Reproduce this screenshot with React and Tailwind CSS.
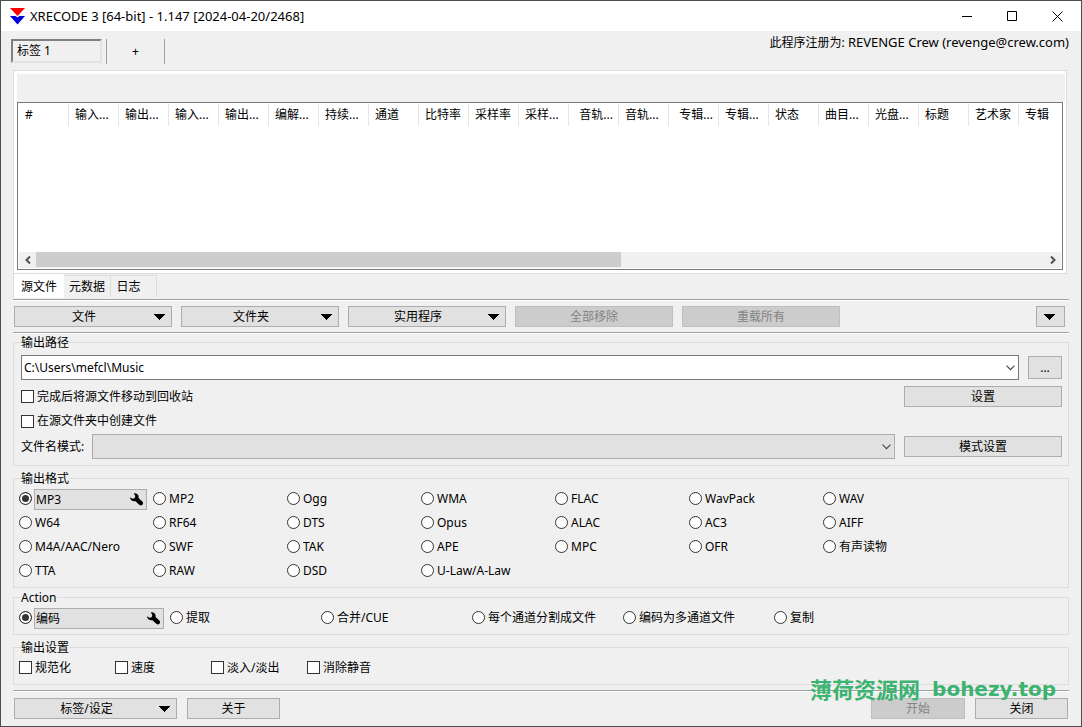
import React, { useState } from "react";
import { clsx } from "clsx";

const COLUMNS = [
  { label: "#" },
  { label: "输入..." },
  { label: "输出..." },
  { label: "输入..." },
  { label: "输出..." },
  { label: "编解..." },
  { label: "持续..." },
  { label: "通道" },
  { label: "比特率" },
  { label: "采样率" },
  { label: "采样..." },
  { label: "音轨...", right: true },
  { label: "音轨..." },
  { label: "专辑...", right: true },
  { label: "专辑..." },
  { label: "状态" },
  { label: "曲目..." },
  { label: "光盘..." },
  { label: "标题" },
  { label: "艺术家" },
  { label: "专辑" },
];

const FORMATS = [
  "MP3", "MP2", "Ogg", "WMA", "FLAC", "WavPack", "WAV",
  "W64", "RF64", "DTS", "Opus", "ALAC", "AC3", "AIFF",
  "M4A/AAC/Nero", "SWF", "TAK", "APE", "MPC", "OFR", "有声读物",
  "TTA", "RAW", "DSD", "U-Law/A-Law",
];

const ACTIONS = ["编码", "提取", "合并/CUE", "每个通道分割成文件", "编码为多通道文件", "复制"];

const OUTPUT_OPTIONS = ["规范化", "速度", "淡入/淡出", "消除静音"];

const Logo = () => (
  <svg width="15" height="17" viewBox="0 0 15 17" className="shrink-0">
    <path d="M0 0h15L7.5 8z" fill="#ff0000" />
    <path d="M0 8h5.5l2 1.6L9.5 8H15L7.5 16.5z" fill="#0000e0" />
  </svg>
);

const DownArrow = () => (
  <svg width="12" height="6" viewBox="0 0 12 6" shapeRendering="crispEdges">
    <path d="M0 0h12L6 6z" fill="#000" />
  </svg>
);

const Chevron = () => (
  <svg
    width="9"
    height="6"
    viewBox="0 0 9 6"
    className="pointer-events-none absolute right-1 top-1/2 -translate-y-1/2"
  >
    <path d="M.5.7l4 4 4-4" fill="none" stroke="#444" strokeWidth="1.1" />
  </svg>
);

const Wrench = () => (
  <svg width="13" height="13" viewBox="0 0 13 13" className="shrink-0">
    <path
      d="M3.8.2C6.300-.2 8.600 1.300 8.600 3.700c0 .500 0 .800-.100 1.200l3.800 3.700c1 1 1 2.300.100 3.200-.900.900-2.200.900-3.200-.100L5.500 8.200C2.900 8.800.100 7.200 0 4.200L2.400 5.700 4.700 5.200 5.300 3z"
      fill="#000"
    />
  </svg>
);

const Separator = () => <div className="h-[2px] shrink-0 border-t border-[#a0a0a0] bg-white" />;

const Button = ({ children, menu, className, disabled }) => (
  <button
    disabled={disabled}
    className={clsx(
      "flex h-[21px] shrink-0 items-center justify-center border",
      disabled
        ? "border-[#bfbfbf] bg-[#cccccc] text-[#838383]"
        : "border-[#adadad] bg-[#e1e1e1] hover:border-[#0078d7] hover:bg-[#e5f1fb]",
      className
    )}
  >
    {menu ? (
      <>
        <span className="flex-1 text-center">{children}</span>
        <span className="pr-[6px]">
          <DownArrow />
        </span>
      </>
    ) : (
      children
    )}
  </button>
);

const Group = ({ title, className, children }) => (
  <fieldset className={clsx("min-w-0 shrink-0 border border-[#dcdcdc]", className)}>
    <legend className="ml-[7px] h-[17px] leading-[17px]">{title}</legend>
    {children}
  </fieldset>
);

const CheckBox = ({ label }) => (
  <label className="flex items-center gap-[3px]">
    <input
      type="checkbox"
      className="size-[13px] shrink-0 appearance-none border border-[#333] bg-white checked:bg-[#333] checked:shadow-[inset_0_0_0_2px_white]"
    />
    <span>{label}</span>
  </label>
);

const Radio = ({ name, label, checked, onChange, boxClass }) => (
  <label className="flex h-6 items-start gap-[2px]">
    <input
      type="radio"
      name={name}
      checked={checked}
      onChange={onChange}
      className="mt-[5px] size-[13px] shrink-0 appearance-none rounded-full border border-[#333] bg-white checked:bg-[#333] checked:shadow-[inset_0_0_0_2px_white]"
    />
    {checked ? (
      <span
        className={clsx(
          "mt-[2px] flex h-[21px] items-center justify-between border border-[#adadad] bg-[#e1e1e1] pl-px pr-[3px]",
          boxClass
        )}
      >
        {label}
        <Wrench />
      </span>
    ) : (
      <span className="pl-px pt-1">{label}</span>
    )}
  </label>
);

const TitleBar = () => (
  <header className="flex h-[30px] shrink-0 items-center bg-white pl-[9px]">
    <Logo />
    <h1 className="ml-[5px] flex-1 text-[13px]">XRECODE 3 [64-bit] - 1.147 [2024-04-20/2468]</h1>
    <button aria-label="最小化" className="flex h-full w-[45px] items-center justify-center">
      <svg width="10" height="10" viewBox="0 0 10 10" stroke="#000">
        <path d="M0 5.5h10" />
      </svg>
    </button>
    <button aria-label="最大化" className="flex h-full w-[45px] items-center justify-center">
      <svg width="10" height="10" viewBox="0 0 10 10" fill="none" stroke="#000">
        <path d="M.5.5h9v9h-9z" />
      </svg>
    </button>
    <button aria-label="关闭" className="flex h-full w-[47px] items-center justify-center">
      <svg width="11" height="11" viewBox="0 0 11 11" stroke="#000">
        <path d="M.5.5l10 10M10.5.5l-10 10" />
      </svg>
    </button>
  </header>
);

const FileList = () => (
  <div className="mr-[2px] flex min-h-[204px] flex-1 flex-col border border-[#dcdcdc] bg-white p-[3px] pr-px">
    <div className="h-7 shrink-0 bg-[#f0f0f0]" />
    <div className="mr-[2px] flex flex-1 flex-col overflow-hidden border border-[#7a7a7a]">
      <div className="flex-1 overflow-hidden pl-px pt-px">
        <table className="w-full min-w-[1043px] table-fixed border-separate border-spacing-0">
          <thead>
            <tr>
              {COLUMNS.map((col, i) => (
                <th
                  key={i}
                  className={clsx(
                    "h-[22px] overflow-hidden whitespace-nowrap p-0 font-normal last:w-auto last:border-r-0",
                    "w-[50px] border-r border-[#e5e5e5]",
                    col.right ? "pr-[5px] text-right" : "pl-[6px] text-left"
                  )}
                >
                  {col.label}
                </th>
              ))}
            </tr>
          </thead>
        </table>
      </div>
      <div className="mx-px mb-px flex h-4 shrink-0 bg-[#f0f0f0]">
        <button aria-label="向左滚动" className="flex w-[17px] items-center justify-center">
          <svg width="6" height="8" viewBox="0 0 6 8" fill="none" stroke="#505050" strokeWidth="2">
            <path d="M5 .5L1.5 4 5 7.5" />
          </svg>
        </button>
        <div className="flex-1">
          <div className="h-[15px] w-[58%] bg-[#cdcdcd]" />
        </div>
        <button aria-label="向右滚动" className="flex w-[17px] items-center justify-center">
          <svg width="6" height="8" viewBox="0 0 6 8" fill="none" stroke="#505050" strokeWidth="2">
            <path d="M1 .5L4.5 4 1 7.5" />
          </svg>
        </button>
      </div>
    </div>
  </div>
);

const ViewTabs = () => (
  <div className="flex h-[25px] shrink-0 items-start">
    <button className="h-6 w-[51px] border-l border-[#dcdcdc] bg-white pt-[2px]">源文件</button>
    <button className="mt-px h-[22px] w-[47px] border-r border-t border-[#dcdcdc]">元数据</button>
    <button className="mt-px h-[22px] w-[46px] border-r border-t border-[#dcdcdc] pr-[10px]">日志</button>
  </div>
);

const App = () => {
  const [format, setFormat] = useState("MP3");
  const [action, setAction] = useState("编码");

  return (
    <div className="relative flex min-h-screen flex-col border border-[#465055] bg-[#f0f0f0] font-['Noto_Sans','Noto_Sans_CJK_SC',sans-serif] text-[12px] leading-4 text-black">
      <TitleBar />

      {/* Session tabs */}
      <div className="flex h-[39px] shrink-0 items-start justify-between pl-[10px] pr-3 pt-[3px]">
        <div className="flex pt-[5px]">
          <button className="h-6 w-[91px] border-2 border-b-[#e3e3e3] border-l-[#808080] border-r-[#e3e3e3] border-t-[#808080] pl-1 text-left">
            标签 1
          </button>
          <button className="ml-1 h-[25px] w-[59px] border-x border-[#a0a0a0]">+</button>
        </div>
        <p>
          此程序注册为: <span className="text-[13px]">REVENGE Crew (revenge@crew.com)</span>
        </p>
      </div>

      <main className="flex flex-1 flex-col px-3">
        <FileList />
        <ViewTabs />
        <Separator />

        <div className="flex shrink-0 gap-[9px] py-[5px] pl-px pr-1">
          <Button menu className="w-[158px]">文件</Button>
          <Button menu className="w-[158px]">文件夹</Button>
          <Button menu className="w-[158px]">实用程序</Button>
          <Button disabled className="w-[158px]">全部移除</Button>
          <Button disabled className="w-[158px]">重载所有</Button>
          <button
            aria-label="更多"
            className="ml-auto flex h-[21px] w-[29px] items-center justify-center border border-[#adadad] bg-[#e1e1e1] pr-[3px]"
          >
            <DownArrow />
          </button>
        </div>
        <Separator />

        <Group title="输出路径">
          <div className="flex flex-col pb-[6px] pl-[7px] pr-[6px] pt-1">
            <div className="flex items-center gap-[9px]">
              <div className="relative flex-1">
                <select
                  aria-label="输出路径"
                  className="block h-[25px] w-full appearance-none border border-[#7a7a7a] bg-white pl-[2px]"
                >
                  <option>C:\Users\mefcl\Music</option>
                </select>
                <Chevron />
              </div>
              <Button className="h-[23px] w-[34px]">...</Button>
            </div>
            <div className="flex h-[33px] items-center justify-between">
              <CheckBox label="完成后将源文件移动到回收站" />
              <Button className="w-[158px]">设置</Button>
            </div>
            <div className="flex h-4 items-center">
              <CheckBox label="在源文件夹中创建文件" />
            </div>
            <div className="mt-[5px] flex items-center gap-[9px]">
              <label htmlFor="pattern" className="w-[62px] shrink-0 whitespace-nowrap">
                文件名模式:
              </label>
              <div className="relative flex-1">
                <select
                  id="pattern"
                  className="block h-[25px] w-full appearance-none border border-[#adadad] bg-[#e1e1e1]"
                />
                <Chevron />
              </div>
              <Button className="w-[158px]">模式设置</Button>
            </div>
          </div>
        </Group>

        <Group title="输出格式" className="mt-1">
          <div className="grid grid-cols-[repeat(7,134px)] pb-1 pl-[5px]">
            {FORMATS.map((name) => (
              <Radio
                key={name}
                name="format"
                label={name}
                checked={format === name}
                onChange={() => setFormat(name)}
                boxClass="w-[113px]"
              />
            ))}
          </div>
        </Group>

        <Group title="Action" className="mt-px">
          <div className="grid grid-cols-[repeat(6,151px)] pb-1 pl-[5px]">
            {ACTIONS.map((name) => (
              <Radio
                key={name}
                name="action"
                label={name}
                checked={action === name}
                onChange={() => setAction(name)}
                boxClass="w-[130px]"
              />
            ))}
          </div>
        </Group>

        <Group title="输出设置" className="mt-1">
          <div className="grid h-7 grid-cols-[repeat(4,96px)] pb-[5px] pl-[5px]">
            {OUTPUT_OPTIONS.map((name) => (
              <CheckBox key={name} label={name} />
            ))}
          </div>
        </Group>

        <div className="mt-[5px]">
          <Separator />
        </div>
        <footer className="flex gap-[10px] pb-[7px] pl-px pr-px pt-[6px]">
          <Button menu className="w-[163px]">标签/设定</Button>
          <Button className="w-[93px]">关于</Button>
          <Button disabled className="ml-auto w-[94px]">开始</Button>
          <Button className="w-[93px]">关闭</Button>
        </footer>
      </main>

      {/* Site mark over the bottom right corner */}
      <div className="pointer-events-none absolute bottom-[27px] right-[25px] flex items-center gap-3 font-bold leading-5 text-[#3cb371]">
        <span className="text-[22px]">薄荷资源网</span>
        <span className="font-['DejaVu_Sans',sans-serif] text-[20px]">bohezy.top</span>
      </div>
    </div>
  );
};

export default App;
